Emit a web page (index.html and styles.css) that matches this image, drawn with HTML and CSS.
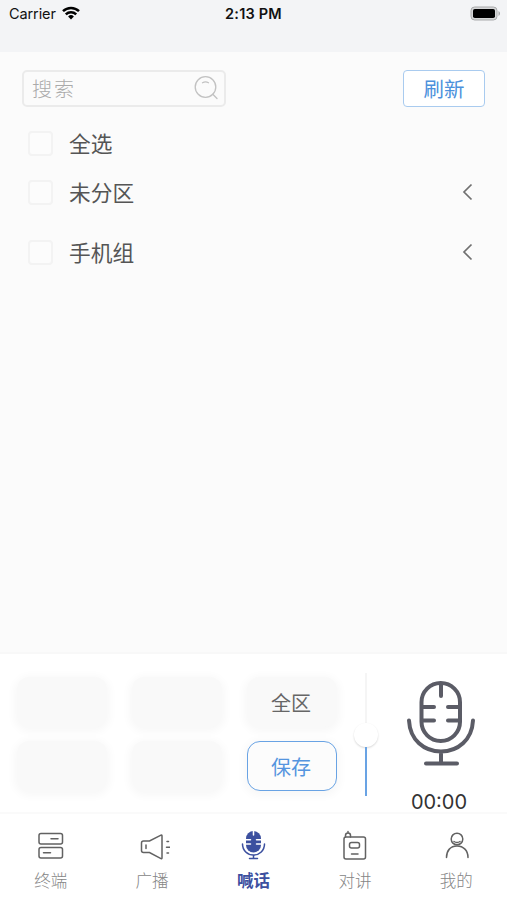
FILE: index.html
```html
<!DOCTYPE html>
<html lang="zh-CN">
<head>
    <meta charset="UTF-8">
    <meta name="viewport" content="width=device-width, initial-scale=1.0">
    <title>喊话</title>
    <link rel="stylesheet" href="styles.css">
</head>
<body>
    <div class="app">
        <header class="status-bar">
            <div class="carrier">
                <span>Carrier</span>
                <svg width="18" height="14" viewBox="0 0 18 14" fill="none" stroke="#000" stroke-width="2.5">
                    <path d="M1 5.2a11.6 11.6 0 0 1 16 0"/>
                    <path d="M3.8 8.3a7.6 7.6 0 0 1 10.4 0"/>
                    <path d="M6.1 10.5a4.2 4.2 0 0 1 5.8 0L9 13.4z" fill="#000" stroke="none"/>
                </svg>
            </div>
            <div class="time">2:13 PM</div>
            <svg class="battery" width="31" height="15" viewBox="0 0 31 15">
                <rect x="1" y="1" width="26" height="13" rx="3.6" fill="#d6d7d8" stroke="#a9aaab"/>
                <rect x="3" y="3" width="22" height="9" rx="1.8" fill="#000"/>
                <path d="M28.5 5v5c2-1 2-4 0-5z" fill="#a3a4a5"/>
            </svg>
        </header>

        <main class="content">
            <div class="toolbar">
                <div class="search">
                    <span>搜索</span>
                    <svg width="26" height="26" viewBox="0 0 26 26" fill="none" stroke="#c2c2c2" stroke-width="1.3" stroke-linecap="round">
                        <circle cx="12.5" cy="11" r="10.3"/>
                        <path d="M19.8 18.3l4.2 4.2M9.5 6.7q3-1.6 6 0"/>
                    </svg>
                </div>
                <button class="refresh">刷新</button>
            </div>
            <div class="row row-all">
                <span class="checkbox"></span>
                <span class="row-name">全选</span>
            </div>
            <div class="row">
                <span class="checkbox"></span>
                <span class="row-name">未分区</span>
                <svg class="arrow" width="12" height="18" viewBox="0 0 12 18"><path d="M9.5 1.5L2 9l7.5 7.5"/></svg>
            </div>
            <div class="row">
                <span class="checkbox"></span>
                <span class="row-name">手机组</span>
                <svg class="arrow" width="12" height="18" viewBox="0 0 12 18"><path d="M9.5 1.5L2 9l7.5 7.5"/></svg>
            </div>
        </main>

        <section class="panel">
            <div class="keys">
                <div class="key"></div>
                <div class="key"></div>
                <div class="key">全区</div>
                <div class="key"></div>
                <div class="key"></div>
                <div class="key key-save">保存</div>
            </div>
            <div class="slider">
                <div class="track-top"></div>
                <div class="thumb"></div>
                <div class="track-bottom"></div>
            </div>
            <div class="record">
                <svg width="70" height="88" viewBox="0 0 70 88" fill="none" stroke="#5b5c66" stroke-width="4" stroke-linecap="round">
                    <rect x="15.5" y="3" width="38.5" height="58" rx="19.2"/>
                    <path d="M35 4v12M16 27h12M16 40.5h12M42 27h12M42 40.5h12"/>
                    <path d="M3 40.5C4 60 18 71.5 35 71.5S66 60 67 40.5M35 72v11M20 83.5h31"/>
                </svg>
                <div class="timer">00:00</div>
            </div>
        </section>

        <nav class="tabs">
            <div class="tab">
                <svg width="36" height="32" viewBox="0 0 36 32">
                    <rect x="6" y="3.5" width="23.5" height="10.5" rx="2"/>
                    <rect x="6" y="17.5" width="23.5" height="10.5" rx="2"/>
                    <path d="M18 8.7h7M10.5 22.7h7"/>
                </svg>
                <span>终端</span>
            </div>
            <div class="tab">
                <svg width="36" height="32" viewBox="0 0 36 32">
                    <path d="M9.5 11h6l11.500-5.800q1-.4 1 .7v22q0 1.100-1 .7L15.500 22.500h-6q-2 0-2-2V13q0-2 2-2zM12 15v3.500M33 11.500h1.500M32.500 17.200h4M33 23h1.500"/>
                </svg>
                <span>广播</span>
            </div>
            <div class="tab active">
                <svg width="36" height="32" viewBox="0 0 36 32">
                    <rect class="solid" x="11" y="1" width="15" height="21.5" rx="7.5"/>
                    <path class="cut" d="M18.5 1v4M11 9.700h4.500M11 14h4.500M21.500 9.700H26M21.500 14H26"/>
                    <path d="M7.500 14C7.500 20.500 12.500 25 18.500 25S29.500 20.500 29.500 14M18.500 25v3.500M14.500 28.500h8"/>
                </svg>
                <span>喊话</span>
            </div>
            <div class="tab">
                <svg width="36" height="32" viewBox="0 0 36 32">
                    <rect x="7" y="7" width="21.5" height="22" rx="2"/>
                    <rect x="12.5" y="12.5" width="10" height="5.5" rx="2"/>
                    <path d="M14.5 24H21M8.500 7V5.500Q8.500 3 11 3t2.500 2.500V7M11 1.500V3"/>
                </svg>
                <span>对讲</span>
            </div>
            <div class="tab">
                <svg width="36" height="32" viewBox="0 0 36 32">
                    <circle cx="19" cy="9" r="5.8"/>
                    <path d="M8.500 27.500C8.500 20.500 12.500 16 19 16S30 20.500 30 27.500M16 11.500q3 2 6 0"/>
                </svg>
                <span>我的</span>
            </div>
        </nav>
    </div>
</body>
</html>
```
FILE: styles.css
```css
* {
    box-sizing: border-box;
}
body {
    margin: 0;
    font-family: "Noto Sans CJK SC", sans-serif;
    background-color: #fff;
}
.app {
    height: 900px;
    display: flex;
    flex-direction: column;
    overflow: hidden;
}
.status-bar {
    height: 52px;
    padding: 4px 6px 0 9px;
    display: grid;
    grid-template-columns: 1fr auto 1fr;
    align-items: start;
    background-color: #f3f4f6;
    font-family: Inter, sans-serif;
    font-size: 14.5px;
    line-height: 20px;
    color: #111;
}
.carrier {
    display: flex;
    gap: 6px;
    letter-spacing: -0.1px;
}
.carrier svg {
    margin-top: 2px;
}
.time {
    margin-right: 3px;
    font-weight: 600;
    letter-spacing: 0.2px;
}
.battery {
    justify-self: end;
    margin-top: 2px;
}
.content {
    flex: 1;
    background-color: #fbfbfb;
    border-bottom: 2px solid #f8f8f8;
}
.toolbar {
    display: flex;
    justify-content: space-between;
    padding: 18px 22px 0;
}
.search {
    width: 204px;
    height: 37px;
    padding: 0 5px 0 8px;
    display: flex;
    justify-content: space-between;
    align-items: center;
    border: 2px solid #ebebeb;
    border-radius: 5px;
    font-size: 20px;
    font-weight: 300;
    letter-spacing: 2px;
    color: #aaa;
}
.refresh {
    width: 82px;
    height: 37px;
    padding: 0 0 2px;
    border: 1.5px solid #a9cbef;
    border-radius: 4px;
    background-color: #fff;
    font-family: inherit;
    font-size: 20.5px;
    color: #4c91dc;
}
.row {
    height: 60px;
    padding: 0 33px 0 28px;
    display: flex;
    align-items: center;
}
.row-all {
    height: 37px;
    margin-top: 18px;
}
.checkbox {
    width: 25px;
    height: 25px;
    margin-right: 16px;
    border: 2px solid #f3f3f3;
    border-radius: 4px;
    background-color: #fcfcfc;
}
.row-name {
    padding-bottom: 1px;
    font-size: 21.7px;
    line-height: 30px;
    color: #555;
}
.arrow {
    margin-left: auto;
    fill: none;
    stroke: #707070;
    stroke-width: 1.7;
}
.panel {
    height: 160px;
    padding-left: 17px;
    display: flex;
    background-color: #fff;
    border-bottom: 2px solid #fafafa;
}
.keys {
    padding-top: 23px;
    display: grid;
    grid-template-columns: repeat(3, 90px);
    grid-auto-rows: 50px;
    gap: 14px 25px;
}
.key {
    padding-right: 2px;
    display: flex;
    justify-content: center;
    align-items: center;
    border-radius: 13px;
    background-color: #f9f9f9;
    box-shadow: 0 2px 8px 3px rgba(0, 0, 0, 0.03);
    font-size: 20px;
    color: #666;
}
.key-save {
    border: 1.5px solid #69a3e4;
    background-color: #fcfcfc;
    color: #5595df;
}
.slider {
    width: 26px;
    margin-left: 16px;
    padding-top: 19px;
    display: flex;
    flex-direction: column;
    align-items: center;
}
.track-top {
    width: 2px;
    height: 50px;
    background-color: #f5f5f5;
}
.thumb {
    width: 24px;
    height: 24px;
    border-radius: 50%;
    background-color: #fff;
    box-shadow: 0 1px 2px rgba(0, 0, 0, 0.16);
}
.track-bottom {
    width: 2px;
    height: 49px;
    background-color: #69a3e4;
}
.record {
    width: 123px;
    padding-top: 26px;
    display: flex;
    flex-direction: column;
    align-items: center;
}
.record svg {
    flex-shrink: 0;
}
.timer {
    margin-top: 20px;
    padding-right: 3px;
    font-family: Inter, sans-serif;
    font-size: 20px;
    line-height: 28px;
    color: #333;
}
.tabs {
    height: 86px;
    display: grid;
    grid-template-columns: repeat(5, 1fr);
}
.tab {
    padding-top: 16px;
    display: flex;
    flex-direction: column;
    align-items: center;
    font-size: 16.5px;
    font-weight: 300;
    line-height: 24px;
    color: #858585;
}
.tab svg {
    margin-bottom: 6px;
    fill: none;
    stroke: #626262;
    stroke-width: 1.5;
    stroke-linecap: round;
}
.tab.active {
    font-weight: 700;
    color: #3c509f;
}
.tab.active svg {
    stroke: #3c509f;
}
.tab .solid {
    fill: #3c509f;
    stroke: none;
}
.tab .cut {
    stroke: #fff;
}
```
